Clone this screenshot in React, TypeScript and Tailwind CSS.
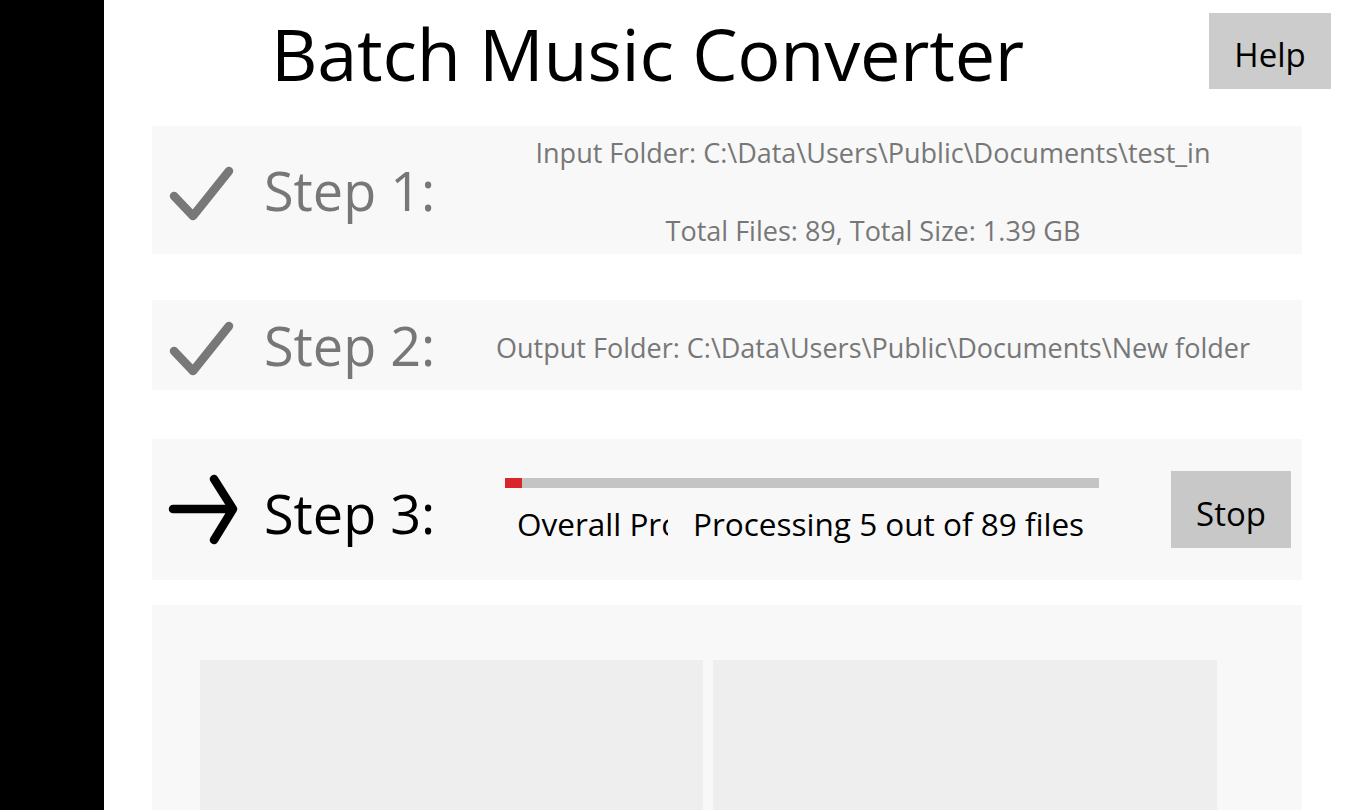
import React from "react";

const font = { fontFamily: '"Open Sans", "Noto Sans", sans-serif' };

function Check() {
  return (
    <svg width="70" height="70" viewBox="0 0 70 70" className="shrink-0">
      <path d="M6 41 L25 61 L61 16" fill="none" stroke="#787878" strokeWidth="8.5" strokeLinecap="round" strokeLinejoin="round" />
    </svg>
  );
}

function Arrow() {
  return (
    <svg width="72" height="76" viewBox="0 0 72 76" className="shrink-0">
      <path d="M5 37 L63 37 M46 7 L65 37 L46 68" fill="none" stroke="#000" strokeWidth="8.5" strokeLinecap="round" strokeLinejoin="round" />
    </svg>
  );
}

export default function App() {
  return (
    <div className="flex w-[1350px] h-[810px] overflow-hidden bg-white" style={font}>
      <div className="w-[104px] shrink-0 bg-black" />
      <div className="flex-1 flex flex-col px-[48px]">
        <div className="flex h-[126px] relative">
          <div className="pl-[119px] pt-[17px] text-[72px] leading-none text-black tracking-[-0.25px] whitespace-nowrap">Batch Music Converter</div>
          <div className="absolute right-[-29px] top-[13px] w-[122px] h-[76px] bg-[#cccccc] flex items-center justify-center pt-[8px] text-[33px] text-black">Help</div>
        </div>
        <div className="h-[128px] bg-[#f8f8f8] flex items-center">
          <div className="pl-[16px] w-[112px]"><Check /></div>
          <div className="text-[54px] text-[#777777] w-[180px] whitespace-nowrap">Step 1:</div>
          <div className="flex-1 flex flex-col items-center text-[27px] text-[#777777] gap-[37px] pt-[4px]">
            <div className="whitespace-nowrap">Input Folder: C:\Data\Users\Public\Documents\test_in</div>
            <div className="whitespace-nowrap">Total Files: 89, Total Size: 1.39 GB</div>
          </div>
        </div>
        <div className="h-[46px]" />
        <div className="h-[90px] bg-[#f8f8f8] flex items-center">
          <div className="pl-[16px] w-[112px]"><Check /></div>
          <div className="text-[54px] text-[#777777] w-[180px] whitespace-nowrap">Step 2:</div>
          <div className="flex-1 flex flex-col items-center text-[27px] text-[#777777] pt-[6px]">
            <div className="whitespace-nowrap">Output Folder: C:\Data\Users\Public\Documents\New folder</div>
          </div>
        </div>
        <div className="h-[49px]" />
        <div className="h-[141px] bg-[#f8f8f8] flex items-center">
          <div className="pl-[16px] w-[112px]"><Arrow /></div>
          <div className="text-[54px] text-black w-[241px] whitespace-nowrap pt-[8px]">Step 3:</div>
          <div className="w-[594px] flex flex-col pt-[6px]">
            <div className="h-[10px] bg-[#c4c4c4] flex">
              <div className="bg-[#d9262b] h-full" style={{ width: 17 }} />
            </div>
            <div className="flex text-[31.5px] text-black mt-[12px] pl-[12px]">
              <div className="w-[151px] overflow-hidden whitespace-nowrap">Overall Progress</div>
              <div className="pl-[25px] whitespace-nowrap">Processing 5 out of 89 files</div>
            </div>
          </div>
          <div className="flex-1" />
          <div className="w-[120px] h-[77px] bg-[#c8c8c8] mr-[11px] flex items-center justify-center pt-[9px] text-[33px] text-black">Stop</div>
        </div>
        <div className="h-[25px]" />
        <div className="flex-1 bg-[#f8f8f8] pt-[55px] pl-[48px] flex gap-[10px]">
          <div className="w-[503px] bg-[#eeeeee]" />
          <div className="w-[504px] bg-[#eeeeee]" />
        </div>
      </div>
    </div>
  );
}
